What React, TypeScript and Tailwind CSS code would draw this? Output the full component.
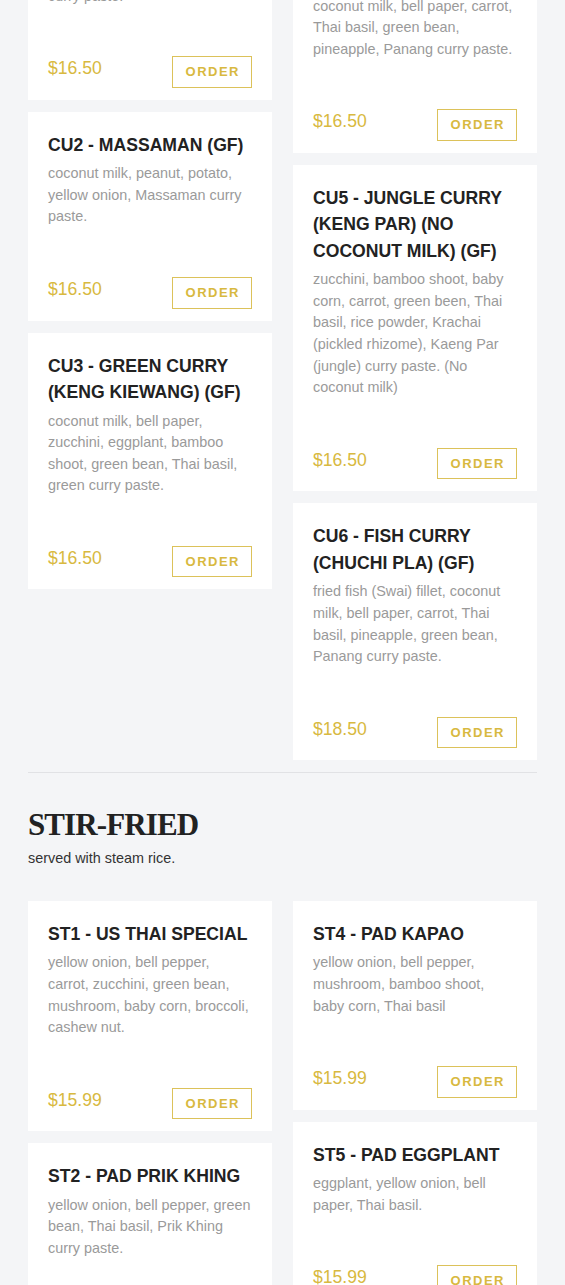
import React from "react";

type Item = { title: string; desc: React.ReactNode; price: string };

const curryLeft: Item[] = [
  {
    title: "CU1 - RED CURRY (GF)",
    desc: (
      <>
        coconut milk, bamboo shoot,
        <br />
        bell paper, Thai basil, red
        <br />
        curry paste.
      </>
    ),
    price: "$16.50",
  },
  {
    title: "CU2 - MASSAMAN (GF)",
    desc: "coconut milk, peanut, potato, yellow onion, Massaman curry paste.",
    price: "$16.50",
  },
  {
    title: "CU3 - GREEN CURRY (KENG KIEWANG) (GF)",
    desc: "coconut milk, bell paper, zucchini, eggplant, bamboo shoot, green bean, Thai basil, green curry paste.",
    price: "$16.50",
  },
];

const curryRight: Item[] = [
  {
    title: "CU4 - PANANG CURRY (KENG PANANG) (WITH PINEAPPLE) (GF)",
    desc: "coconut milk, bell paper, carrot, Thai basil, green bean, pineapple, Panang curry paste.",
    price: "$16.50",
  },
  {
    title: "CU5 - JUNGLE CURRY (KENG PAR) (NO COCONUT MILK) (GF)",
    desc: "zucchini, bamboo shoot, baby corn, carrot, green been, Thai basil, rice powder, Krachai (pickled rhizome), Kaeng Par (jungle) curry paste. (No coconut milk)",
    price: "$16.50",
  },
  {
    title: "CU6 - FISH CURRY (CHUCHI PLA) (GF)",
    desc: "fried fish (Swai) fillet, coconut milk, bell paper, carrot, Thai basil, pineapple, green bean, Panang curry paste.",
    price: "$18.50",
  },
];

const stirLeft: Item[] = [
  {
    title: "ST1 - US THAI SPECIAL",
    desc: "yellow onion, bell pepper, carrot, zucchini, green bean, mushroom, baby corn, broccoli, cashew nut.",
    price: "$15.99",
  },
  {
    title: "ST2 - PAD PRIK KHING",
    desc: "yellow onion, bell pepper, green bean, Thai basil, Prik Khing curry paste.",
    price: "$15.99",
  },
  {
    title: "ST3 - PAD CASHEW NUT",
    desc: "yellow onion, bell pepper, carrot, mushroom, cashew nut.",
    price: "$15.99",
  },
];

const stirRight: Item[] = [
  {
    title: "ST4 - PAD KAPAO",
    desc: "yellow onion, bell pepper, mushroom, bamboo shoot, baby corn, Thai basil",
    price: "$15.99",
  },
  {
    title: "ST5 - PAD EGGPLANT",
    desc: "eggplant, yellow onion, bell paper, Thai basil.",
    price: "$15.99",
  },
  {
    title: "ST6 - PAD PAK",
    desc: "mixed vegetables, garlic sauce.",
    price: "$15.99",
  },
];

function Card({ item }: { item: Item }) {
  return (
    <div className="bg-white px-[20px] pt-[20px] pb-[12px]">
      <h3 className="text-[17.6px] leading-[26.5px] font-bold text-[#222222]">{item.title}</h3>
      <p className="mt-[5px] text-[14.4px] leading-[21.6px] text-[#9a9a9a]">{item.desc}</p>
      <div className="mt-[49px] flex items-start justify-between">
        <span className="text-[17.6px] leading-[24.6px] text-[#d8b940]">{item.price}</span>
        <button className="flex h-[31.5px] w-[80px] items-center justify-center border border-[#dcc25a] pl-[1.5px] text-[13px] font-bold tracking-[1.5px] text-[#d8b940]">
          ORDER
        </button>
      </div>
    </div>
  );
}

function Grid({ left, right }: { left: Item[]; right: Item[] }) {
  return (
    <div className="grid grid-cols-2 items-start gap-x-[21px]">
      <div className="flex flex-col gap-[12px]">
        {left.map((it) => (
          <Card key={it.title} item={it} />
        ))}
      </div>
      <div className="flex flex-col gap-[12px]">
        {right.map((it) => (
          <Card key={it.title} item={it} />
        ))}
      </div>
    </div>
  );
}

export default function App() {
  return (
    <div className="min-h-screen overflow-hidden bg-[#f4f5f7] font-['Liberation_Sans',Arial,sans-serif]">
      <div className="mt-[-109px] px-[28px] pb-[40px]">
        <Grid left={curryLeft} right={curryRight} />
        <div className="mt-[12px] border-t border-[#e1e2e5]" />
        <h2 className="mt-[33px] font-['Liberation_Serif',serif] text-[31px] leading-[37px] font-bold tracking-[-0.9px] text-[#222222]">
          STIR-FRIED
        </h2>
        <p className="mt-[5px] text-[14.4px] leading-[21.6px] text-[#333333]">served with steam rice.</p>
        <div className="mt-[31px]">
          <Grid left={stirLeft} right={stirRight} />
        </div>
      </div>
    </div>
  );
}
